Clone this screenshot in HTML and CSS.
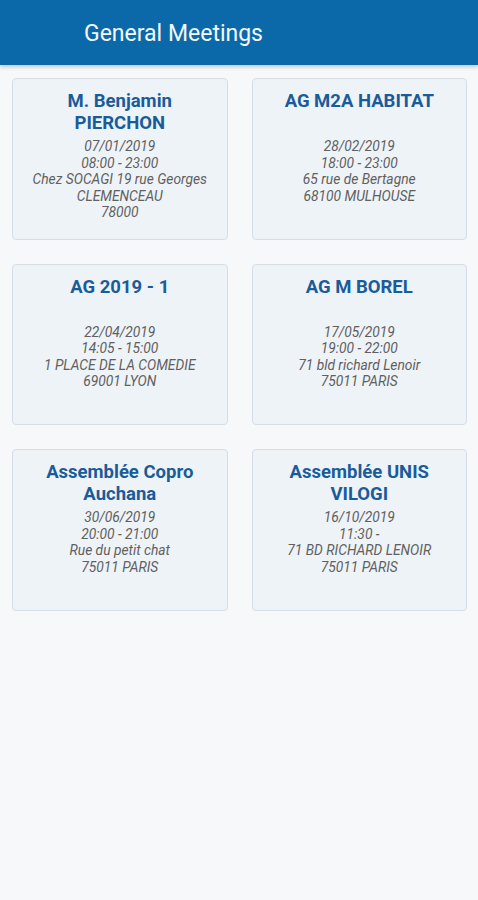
FILE: index.html
```html
<!DOCTYPE html>
<html lang="en">
<head>
    <meta charset="UTF-8">
    <meta name="viewport" content="width=device-width, initial-scale=1.0">
    <title>General Meetings</title>
    <link rel="stylesheet" href="styles.css">
</head>
<body>

<div class="toolbar">
    <h1 class="toolbar-title">General Meetings</h1>
</div>

<div class="meeting-grid">
    <div class="meeting-card">
        <div class="meeting-title">M. Benjamin PIERCHON</div>
        <div class="meeting-info">
            <p>07/01/2019</p>
            <p>08:00 - 23:00</p>
            <p>Chez SOCAGI 19 rue Georges CLEMENCEAU</p>
            <p>78000</p>
        </div>
    </div>
    <div class="meeting-card">
        <div class="meeting-title">AG M2A HABITAT</div>
        <div class="meeting-info">
            <p>28/02/2019</p>
            <p>18:00 - 23:00</p>
            <p>65 rue de Bertagne</p>
            <p>68100 MULHOUSE</p>
        </div>
    </div>
    <div class="meeting-card">
        <div class="meeting-title">AG 2019 - 1</div>
        <div class="meeting-info">
            <p>22/04/2019</p>
            <p>14:05 - 15:00</p>
            <p>1 PLACE DE LA COMEDIE</p>
            <p>69001 LYON</p>
        </div>
    </div>
    <div class="meeting-card">
        <div class="meeting-title">AG M BOREL</div>
        <div class="meeting-info">
            <p>17/05/2019</p>
            <p>19:00 - 22:00</p>
            <p>71 bld richard Lenoir</p>
            <p>75011 PARIS</p>
        </div>
    </div>
    <div class="meeting-card">
        <div class="meeting-title">Assemblée Copro Auchana</div>
        <div class="meeting-info">
            <p>30/06/2019</p>
            <p>20:00 - 21:00</p>
            <p>Rue du petit chat</p>
            <p>75011 PARIS</p>
        </div>
    </div>
    <div class="meeting-card">
        <div class="meeting-title">Assemblée UNIS VILOGI</div>
        <div class="meeting-info">
            <p>16/10/2019</p>
            <p>11:30 -</p>
            <p>71 BD RICHARD LENOIR</p>
            <p>75011 PARIS</p>
        </div>
    </div>
</div>

</body>
</html>
```

FILE: styles.css
```css
body {
    font-family: Roboto, "Noto Sans", sans-serif;
    background-color: #f7f8fa;
    margin: 0;
    padding: 0;
}
.toolbar {
    height: 65px;
    background-color: #0b69aa;
    box-shadow: 0 2px 4px rgba(0, 0, 0, 0.2);
    display: flex;
    align-items: center;
    padding-left: 84px;
}
.toolbar-title {
    margin: 0;
    color: #f4f8fc;
    font-size: 23px;
    font-weight: 400;
    padding-top: 2px;
}
.meeting-grid {
    display: grid;
    grid-template-columns: 1fr 1fr;
    gap: 24px;
    padding: 13px 11px 0 12px;
}
.meeting-card {
    height: 161.5px;
    box-sizing: border-box;
    background-color: #eef3f8;
    border: 1px solid #d6dde5;
    border-radius: 4px;
    padding: 11px 8px 0;
    text-align: center;
}
.meeting-title {
    color: #1a5c9a;
    font-size: 18.5px;
    font-weight: 700;
    line-height: 22px;
    min-height: 44px;
    margin-bottom: 4px;
}
.meeting-info {
    color: #606060;
    font-size: 13.8px;
    font-style: italic;
    line-height: 16.5px;
}
.meeting-info p {
    margin: 0;
}
```
